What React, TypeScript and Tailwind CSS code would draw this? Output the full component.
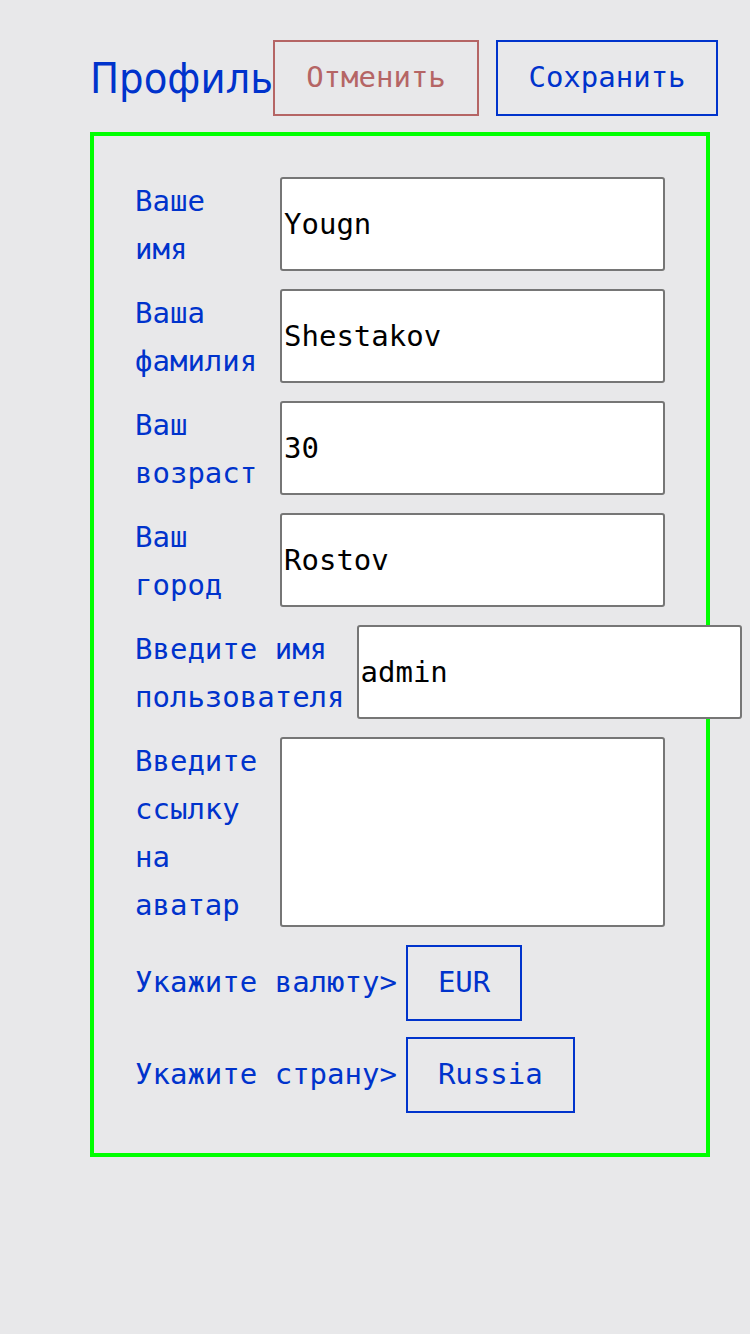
import React from 'react';

const mono = { fontFamily: '"DejaVu Sans Mono", "Liberation Mono", monospace' };

const fields = [
    { label: 'Ваше имя', value: 'Yougn' },
    { label: 'Ваша фамилия', value: 'Shestakov' },
    { label: 'Ваш возраст', value: '30' },
    { label: 'Ваш город', value: 'Rostov' },
    { label: 'Введите имя пользователя', value: 'admin' },
];

const App: React.FC = () => {
    return (
        <div className="min-h-screen bg-[#e8e8ea] pt-10 pl-[90px]" style={mono}>
            <div className="flex items-center h-[76px]">
                <h1 className="w-[183px] whitespace-nowrap text-[43px] leading-none text-[#0033cc] font-['DejaVu_Sans_Condensed','DejaVu_Sans',sans-serif] font-normal [font-stretch:condensed]">
                    Профиль
                </h1>
                <button className="w-[206px] h-[76px] border-2 border-[#b56565] text-[#b56565] text-[29px]">
                    Отменить
                </button>
                <button className="ml-[17px] w-[222px] h-[76px] border-2 border-[#0033cc] text-[#0033cc] text-[29px]">
                    Сохранить
                </button>
            </div>

            <div className="mt-4 w-[620px] border-4 border-[#00ff00] pt-[41px] pb-[40px] pl-[41px] pr-[41px] flex flex-col gap-4 text-[29px] text-[#0033cc]">
                {fields.map((f) => (
                    <div key={f.label} className="flex items-start gap-3">
                        <label className="leading-[48px] shrink">{f.label}</label>
                        <input
                            defaultValue={f.value}
                            className="shrink-0 w-[385px] h-[94px] bg-white border-2 border-[#767676] rounded-[3px] px-[2px] text-black outline-none"
                        />
                    </div>
                ))}
                <div className="flex items-start gap-3">
                    <label className="leading-[48px] shrink">Введите ссылку на аватар</label>
                    <textarea className="shrink-0 w-[385px] h-[190px] bg-white border-2 border-[#767676] rounded-[3px] px-[2px] text-black outline-none resize-none" />
                </div>
                <div className="flex items-center gap-[9px]">
                    <span className="whitespace-nowrap">Укажите валюту&gt;</span>
                    <button className="h-[76px] px-[30px] border-2 border-[#0033cc]">EUR</button>
                </div>
                <div className="flex items-center gap-[9px]">
                    <span className="whitespace-nowrap">Укажите страну&gt;</span>
                    <button className="h-[76px] px-[30px] border-2 border-[#0033cc]">Russia</button>
                </div>
            </div>
        </div>
    );
};

export default App;
